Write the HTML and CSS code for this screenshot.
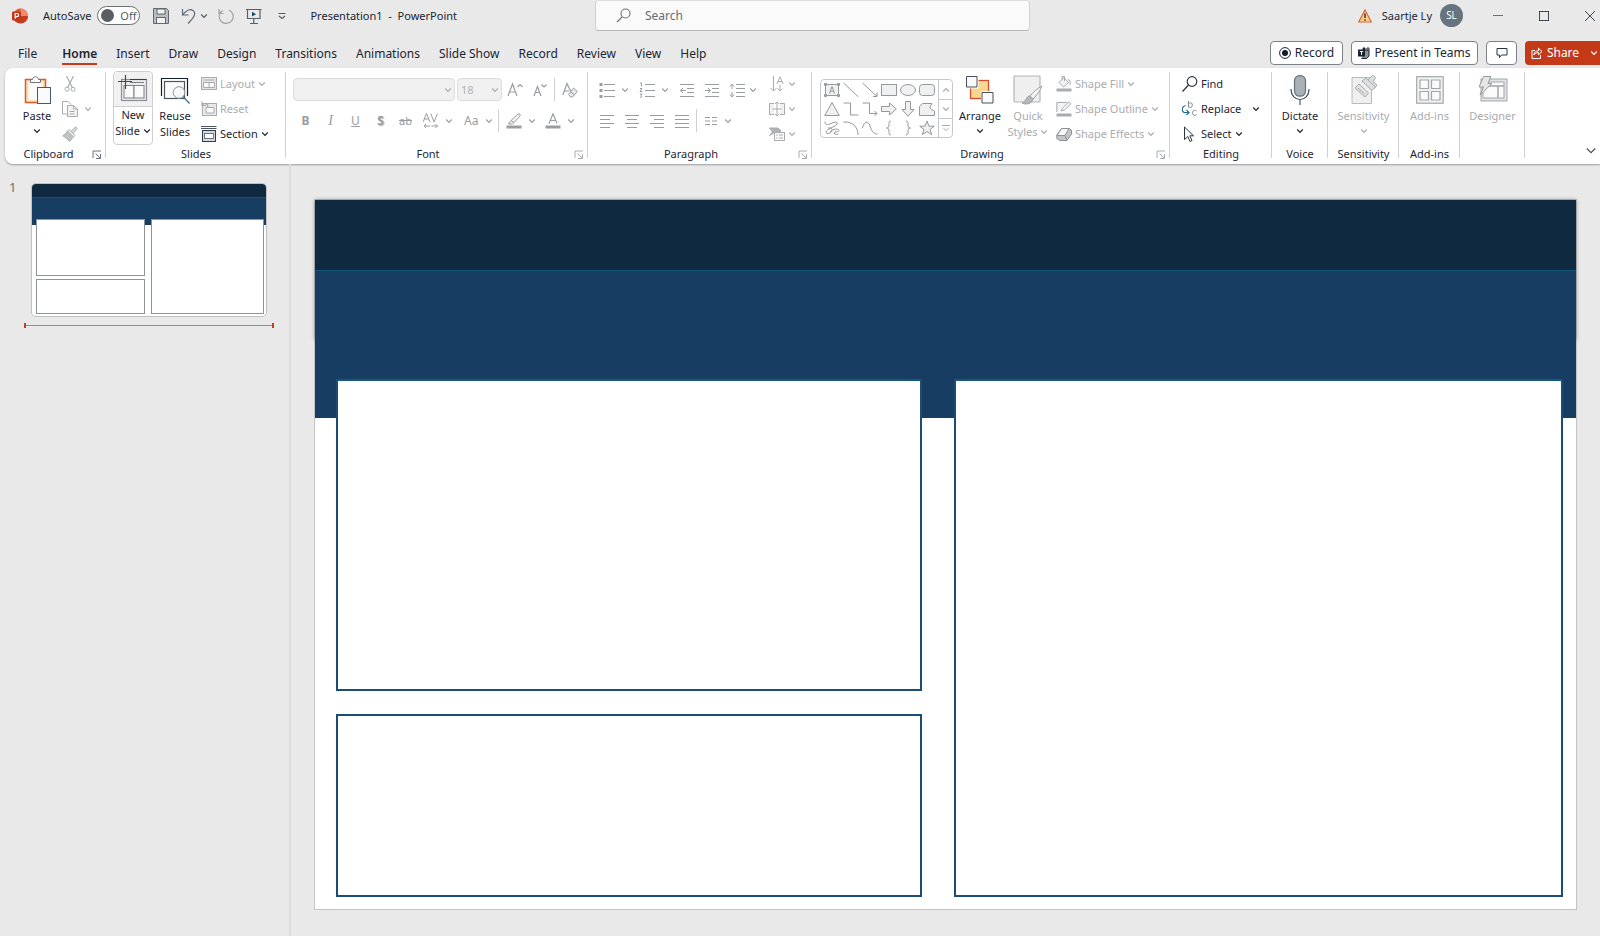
FILE: index.html
```html
<!DOCTYPE html>
<html lang="en">
<head>
<meta charset="utf-8">
<meta name="viewport" content="width=device-width, initial-scale=1">
<title>Presentation1 - PowerPoint</title>
<link rel="stylesheet" href="styles.css">
</head>
<body>
<svg class="defs" aria-hidden="true">
  <symbol id="chev" viewBox="0 0 8 6"><path d="M1.200 1.500 4 4.300 6.800 1.500" fill="none" stroke="currentColor" stroke-width="1.200"/></symbol>
  <symbol id="launch" viewBox="0 0 10 10"><path d="M1 8V1H9M3.500 3.500 8 8M8.500 4V8.500H4" fill="none" stroke="currentColor"/></symbol>
</svg>

<header class="titlebar">
  <div class="title-left">
    <svg class="logo" viewBox="0 0 16 16"><circle cx="8.500" cy="8" r="7.500" fill="#e0582f"/><path d="M8.500.5A7.500 7.500 0 0 1 16 8H8.500z" fill="#f08a68"/><path d="M1.500 10.500A7.500 7.500 0 0 0 16 8H8z" fill="#c43e1c"/><rect y="3.500" width="9" height="9" rx="1" fill="#c2371a"/><path d="M3.200 10.800V5.500H5a1.500 1.500 0 0 1 0 3.200H3.200" fill="none" stroke="#fff" stroke-width="1.200"/></svg>
    <label class="autosave" for="autosave">AutoSave</label>
    <span class="toggle"><input type="checkbox" id="autosave"><span class="knob"></span><span>Off</span></span>
    <button class="qa save" aria-label="Save"><svg width="16" height="16" viewBox="0 0 16 16"><path d="M.5.5H13.500L15.500 2.500V15.500H.5z" fill="#b9bdc1" stroke="#62686e"/><rect x="4" y="1" width="8" height="5" fill="#f1f1f1" stroke="#62686e"/><rect x="3.500" y="9.500" width="9" height="6" fill="#f1f1f1" stroke="#62686e"/></svg></button>
    <button class="qa undo" aria-label="Undo"><svg width="16" height="16" viewBox="0 0 16 16"><path d="M1.500 1V7H7.500M2 6.500C5 2.500 9 .5 12 2.500 15.500 5 13.500 9 7 15.500" fill="none" stroke="#5c6878" stroke-width="1.200"/></svg><svg class="chev"><use href="#chev"/></svg></button>
    <button class="qa redo" aria-label="Repeat"><svg width="16" height="16" viewBox="0 0 16 16"><path d="M1 1V5.500H5.500M11 2A7 7 0 1 1 4.500 2.500L1.500 5" fill="none" stroke="#a0a4a8" stroke-width="1.200"/></svg></button>
    <button class="qa present" aria-label="Start from beginning"><svg width="16" height="16" viewBox="0 0 16 16"><path d="M0 1.500H15.500M1.500 2V10.500H14V2M7.750 10.500V15M4 15.500H12" fill="none" stroke="#54616e" stroke-width="1.200"/><path d="M6 3.800 10 6.200 6 8.600z" fill="#174a6b"/></svg></button>
    <button class="qa more" aria-label="Customize toolbar"><svg width="8" height="8" viewBox="0 0 8 8"><path d="M.5 1.500H7.500M1 4 4 6.500 7 4" fill="none" stroke="#555c63" stroke-width="1.100"/></svg></button>
    <h1 class="doc">Presentation1&nbsp; -&nbsp; PowerPoint</h1>
  </div>
  <label class="search"><svg width="15" height="15" viewBox="0 0 15 15"><circle cx="9.500" cy="5.500" r="4.500" fill="none" stroke="#6b7076" stroke-width="1.100"/><path d="M6.200 8.800 1 14" stroke="#6b7076" stroke-width="1.200"/></svg><input type="text" placeholder="Search" aria-label="Search"></label>
  <div class="title-right">
    <svg class="warn" width="14" height="14" viewBox="0 0 14 14"><path d="M7 1 13.300 13H.7z" fill="#ffcf8a" stroke="#d9663c" stroke-width="1.200"/><path d="M7 4.500V9M7 10.300V11.800" stroke="#444" stroke-width="1.600"/></svg>
    <span class="user">Saartje Ly</span>
    <span class="avatar">SL</span>
    <button class="win" aria-label="Minimize"><svg width="10" height="10" viewBox="0 0 10 10"><path d="M0 4.500H10" stroke="#6a7178"/></svg></button>
    <button class="win" aria-label="Maximize"><svg width="10" height="10" viewBox="0 0 10 10"><rect x=".5" y=".5" width="9" height="9" fill="none" stroke="#3b4650"/></svg></button>
    <button class="win" aria-label="Close"><svg width="10" height="10" viewBox="0 0 10 10"><path d="M0 0 10 10M10 0 0 10" stroke="#3b4650"/></svg></button>
  </div>
</header>

<nav class="tabs" aria-label="Ribbon tabs">
  <a href="#file">File</a><a href="#home" class="active" aria-current="page">Home</a><a href="#insert">Insert</a><a href="#draw">Draw</a><a href="#design">Design</a><a href="#transitions">Transitions</a><a href="#animations">Animations</a><a href="#slideshow">Slide Show</a><a href="#record">Record</a><a href="#review">Review</a><a href="#view">View</a><a href="#help">Help</a>
  <div class="actions">
    <button class="pill rec"><svg width="12" height="12" viewBox="0 0 12 12"><circle cx="6" cy="6" r="5.400" fill="none" stroke="#1b2230"/><circle cx="6" cy="6" r="3" fill="#0f1a2c"/></svg>Record</button>
    <button class="pill teams"><svg width="12" height="12" viewBox="0 0 12 12"><path d="M5 3H11V9L8.500 11.500H3.500" fill="#8a929c" stroke="#1b2230"/><circle cx="6" cy="1.800" r="1.500" fill="#1b2230"/><circle cx="10" cy="2" r="1.200" fill="#fff" stroke="#1b2230"/><rect y="2.500" width="7" height="7" fill="#16202f"/><path d="M1.800 4.500H5.200M3.500 4.500V8" stroke="#fff"/></svg>Present in Teams</button>
    <button class="pill comment" aria-label="Comments"><svg width="12" height="12" viewBox="0 0 12 12"><path d="M1 1.500H11V8H5.500L3.500 10.500V8H1z" fill="none" stroke="#2a3340"/></svg></button>
    <button class="share"><svg width="12" height="12" viewBox="0 0 12 12"><path d="M4 3.500H1V11.500H9.500V8M2.800 8C3.200 5 5 3.800 7.500 3.800V1.200L11 4.600 7.500 7.800V5.600C5.500 5.600 4 6.200 2.800 8z" fill="none" stroke="#fff"/></svg>Share<svg class="chev"><use href="#chev"/></svg></button>
  </div>
</nav>

<section class="ribbon" aria-label="Home">
  <div class="group clipboard">
    <div class="body">
      <button class="big"><span class="ic"><svg width="32" height="30" viewBox="-3 0 32 30"><path d="M1.500 4.500H21.500V27.500H1.500z" fill="#fbe3bd" stroke="#e0592c" stroke-width="1.500"/><rect x="4.500" y="7" width="14" height="18" fill="#fafafa"/><path d="M6.500 7.500V4.500H8.500C9 .8 14 .8 14.500 4.500H16.500V7.500z" fill="#fff" stroke="#6d747b"/><rect x="13.500" y="12.500" width="13" height="16" fill="#f8fafc" stroke="#4c5866"/></svg></span><span>Paste</span><svg class="chev"><use href="#chev"/></svg></button>
      <div class="stack off">
        <button class="row" aria-label="Cut"><svg width="16" height="16" viewBox="0 0 16 16"><path d="M4.500 0 10.500 12M11.500 0 5.500 12" stroke="currentColor" stroke-width="1.200"/><circle cx="5" cy="13.200" r="2" fill="none" stroke="currentColor"/><circle cx="11" cy="13.200" r="2" fill="none" stroke="currentColor"/></svg></button>
        <button class="row" aria-label="Copy"><svg width="16" height="16" viewBox="0 0 16 16"><path d="M5 13H.5V.5H6L9 3.500" fill="none" stroke="currentColor"/><path d="M5.500 4.500H11.500L15.500 8V15.500H5.500z" fill="#f3f3f3" stroke="currentColor"/><path d="M11.500 4.500V8H15M7.500 10.500H12.500M7.500 13H12.500" fill="none" stroke="currentColor"/></svg><svg class="chev gap"><use href="#chev"/></svg></button>
        <button class="row" aria-label="Format painter"><svg width="16" height="16" viewBox="0 0 16 16"><path d="M8.500 6 13.500.8 15.200 2.400 10.500 8" fill="#ddd" stroke="currentColor"/><path d="M7 3.500 13 9.500 11.500 11 5.500 5z" fill="#f1f1f1" stroke="currentColor"/><path d="M5 5.500 11 11.500 7.500 15.500C6 13 3 11.500.8 9.800 2.500 9 4 7.500 5 5.500z" fill="#bfc3c6" stroke="currentColor"/></svg></button>
      </div>
    </div>
    <div class="caption"><span>Clipboard</span><button class="launch" aria-label="Clipboard options"><svg width="10" height="10"><use href="#launch"/></svg></button></div>
  </div>

  <div class="group slides">
    <div class="body">
      <button class="big framed"><span class="ic"><svg width="30" height="28" viewBox="0 0 30 28"><rect x="3.500" y="4.500" width="25" height="21" fill="#ececec" stroke="#8b9197" stroke-width="1.200"/><path d="M12 4.500H28.500" stroke="#33424f"/><rect x="6" y="10.500" width="10" height="12.500" fill="#fafafa" stroke="#7b8289"/><rect x="16" y="10.500" width="10" height="12.500" fill="#fafafa" stroke="#7b8289"/><path d="M12 7.500H26" stroke="#7b8289"/><path d="M7.500 0V14M0 6.500H14" stroke="#3d4b57" stroke-width="1.200"/></svg></span><span>New</span><span>Slide <svg class="chev"><use href="#chev"/></svg></span></button>
      <button class="big reuse"><span class="ic"><svg width="30" height="28" viewBox="0 0 30 28"><path d="M1.500 20V2.500H27.500V20" fill="none" stroke="#101e35" stroke-width="1.200"/><rect x="4.500" y="5.500" width="20" height="17" fill="#fafafa" stroke="#4b5662" stroke-width="1.200"/><circle cx="19" cy="16.500" r="5.800" fill="#f5f7f9" stroke="#8b9197"/><path d="M23.200 20.700 29.500 27.500" stroke="#2b6b92" stroke-width="1.200"/></svg></span><span>Reuse</span><span>Slides</span></button>
      <div class="stack">
        <button class="row off"><svg width="16" height="16" viewBox="0 0 16 16"><rect x=".5" y="1.500" width="15" height="12" fill="#e6e6e6" stroke="currentColor"/><path d="M2.500 4H13.500M2.500 6.500H13.500V11.500H2.500zM8 6.500V11.500" fill="#fafafa" stroke="currentColor"/></svg><span>Layout</span><svg class="chev"><use href="#chev"/></svg></button>
        <button class="row off"><svg width="16" height="16" viewBox="0 0 16 16"><rect x="1.500" y="2.500" width="14" height="12" fill="#e9e9e9" stroke="currentColor"/><path d="M5 6.500H13V12H5z" fill="#fafafa" stroke="currentColor"/><path d="M1 .5V4.500H5M1.500 4C4 1 8 3 6.500 7" fill="none" stroke="currentColor" stroke-width="1.200"/></svg><span>Reset</span></button>
        <button class="row"><svg width="16" height="16" viewBox="0 0 16 16"><path d="M0 .5H15.500M0 2.500H15.500" stroke="#4a5561"/><rect x="1.500" y="4.500" width="13" height="11" fill="#d5d8da" stroke="#303c4a"/><rect x="3.500" y="7.500" width="9" height="5" fill="#fff" stroke="#6b747d"/></svg><span>Section</span><svg class="chev"><use href="#chev"/></svg></button>
      </div>
    </div>
    <div class="caption"><span>Slides</span></div>
  </div>

  <div class="group font off">
    <div class="body rows">
      <div class="line">
        <span class="combo wide"><select aria-label="Font" disabled><option></option></select><svg class="chev"><use href="#chev"/></svg></span>
        <span class="combo size"><select aria-label="Font size" disabled><option>18</option></select><svg class="chev"><use href="#chev"/></svg></span>
        <button class="tb" aria-label="Increase font size"><svg width="16" height="16" viewBox="0 0 16 16"><path d="M1 14 5.500 2 10 14M2.500 10H8.500M10.500 5 13 2.500 15.500 5" fill="none" stroke="currentColor" stroke-width="1.200"/></svg></button>
        <button class="tb" aria-label="Decrease font size"><svg width="16" height="16" viewBox="0 0 16 16"><path d="M2 14 5.500 4.500 9 14M3 10.500H8M9.500 2.500 12 5 14.500 2.500" fill="none" stroke="currentColor" stroke-width="1.200"/></svg></button>
        <i class="bar"></i>
        <button class="tb" aria-label="Clear formatting"><svg width="16" height="16" viewBox="0 0 16 16"><path d="M.8 13 5 1.500 9 10M2.500 9H7" fill="none" stroke="currentColor" stroke-width="1.200"/><path d="M11.500 6 15.300 9.500 10.500 15H8.500L6.500 12.500zM8.500 9.500 12.500 13" fill="#e9e9e9" stroke="currentColor"/></svg></button>
      </div>
      <div class="line">
        <button class="tb"><b>B</b></button><button class="tb"><i class="ital">I</i></button><button class="tb"><u>U</u></button><button class="tb"><b class="shadow">S</b></button><button class="tb"><s>ab</s></button>
        <button class="split" aria-label="Character spacing"><svg width="16" height="16" viewBox="0 0 16 16"><path d="M0 9 3.500.5 7 9M1.200 6H5.800M7.800.5 11 9 14.500.5M1 13H7M8.500 13H14.500M3 11 1 13 3 15M12.500 11 14.500 13 12.500 15" fill="none" stroke="currentColor"/></svg><svg class="chev"><use href="#chev"/></svg></button>
        <button class="split case">Aa<svg class="chev"><use href="#chev"/></svg></button>
        <i class="bar"></i>
        <button class="split" aria-label="Highlight"><svg width="16" height="16" viewBox="0 0 16 16"><path d="M5 7.500 12 1C14 .5 14.500 1.500 14 3L8 9.500zM5 7.500 2.500 11H6.500L8 9.500" fill="#f3f3f3" stroke="currentColor"/><rect x=".5" y="12.500" width="15" height="3" fill="currentColor"/></svg><svg class="chev"><use href="#chev"/></svg></button>
        <button class="split" aria-label="Font color"><svg width="16" height="16" viewBox="0 0 16 16"><path d="M4 10.500 8 .8 12 10.500M5.200 7.500H10.800" fill="none" stroke="currentColor" stroke-width="1.200"/><rect x=".5" y="12.500" width="15" height="3" fill="currentColor"/></svg><svg class="chev"><use href="#chev"/></svg></button>
      </div>
    </div>
    <div class="caption"><span>Font</span><button class="launch" aria-label="Font options"><svg width="10" height="10"><use href="#launch"/></svg></button></div>
  </div>

  <div class="group para off">
    <div class="body">
      <div class="rows">
        <div class="line">
          <button class="split" aria-label="Bullets"><svg width="16" height="16" viewBox="0 0 16 16"><path d="M5 2.500H16M5 8.500H16M5 14.500H16" stroke="currentColor"/><path d="M.5 1H3.500V4H.5zM.5 7H3.500V10H.5zM.5 13H3.500V16H.5z" fill="currentColor"/></svg><svg class="chev"><use href="#chev"/></svg></button>
          <button class="split" aria-label="Numbering"><svg width="16" height="16" viewBox="0 0 16 16"><path d="M6 2.500H16M6 8.500H16M6 14.500H16M1 1H2.500V4.500M1 6.500H3L1 9.500H3.500M1 12H3L2 13.500 3 14.500 1 15.500" fill="none" stroke="currentColor"/></svg><svg class="chev"><use href="#chev"/></svg></button>
          <button class="tb" aria-label="Decrease indent"><svg width="16" height="16" viewBox="0 0 16 16"><path d="M1 2.500H15M8 6.500H15M8 10.500H15M1 14.500H15M7 8.500H1.500M4 6 1.500 8.500 4 11" fill="none" stroke="currentColor"/></svg></button>
          <button class="tb" aria-label="Increase indent"><svg width="16" height="16" viewBox="0 0 16 16"><path d="M1 2.500H15M8 6.500H15M8 10.500H15M1 14.500H15M1 8.500H6.500M4 6 6.500 8.500 4 11" fill="none" stroke="currentColor"/></svg></button>
          <button class="split spacing" aria-label="Line spacing"><svg width="16" height="16" viewBox="0 0 16 16"><path d="M7 2.500H16M7 6.500H16M7 10.500H16M7 14.500H16M3 2V7M3 10V15M.8 4.500 3 2.200 5.200 4.500M.8 12.500 3 14.800 5.200 12.500" fill="none" stroke="currentColor"/></svg><svg class="chev"><use href="#chev"/></svg></button>
        </div>
        <div class="line">
          <button class="tb" aria-label="Align left"><svg width="16" height="16" viewBox="0 0 16 16"><path d="M1 2.500H15M1 6.500H11M1 10.500H15M1 14.500H11" stroke="currentColor"/></svg></button>
          <button class="tb" aria-label="Center"><svg width="16" height="16" viewBox="0 0 16 16"><path d="M1 2.500H15M3 6.500H13M1 10.500H15M3 14.500H13" stroke="currentColor"/></svg></button>
          <button class="tb" aria-label="Align right"><svg width="16" height="16" viewBox="0 0 16 16"><path d="M1 2.500H15M5 6.500H15M1 10.500H15M5 14.500H15" stroke="currentColor"/></svg></button>
          <button class="tb" aria-label="Justify"><svg width="16" height="16" viewBox="0 0 16 16"><path d="M1 2.500H15M1 6.500H15M1 10.500H15M1 14.500H15" stroke="currentColor"/></svg></button>
          <i class="bar"></i>
          <button class="split spacing" aria-label="Columns"><svg width="16" height="16" viewBox="0 0 16 16"><path d="M1 4.500H6M8 4.500H13M1 8H6M8 8H13M1 11.500H6M8 11.500H13" stroke="currentColor"/></svg><svg class="chev"><use href="#chev"/></svg></button>
        </div>
      </div>
      <div class="stack">
        <button class="row" aria-label="Text direction"><svg width="16" height="16" viewBox="0 0 16 16"><path d="M4.500 0V15M1.500 12 4.500 15 7.500 12M8 8 11 .8 14 8M9 5.500H13M11 9V15M8.500 12.500 11 15 13.500 12.500" fill="none" stroke="currentColor"/></svg><svg class="chev"><use href="#chev"/></svg></button>
        <button class="row" aria-label="Align text"><svg width="16" height="16" viewBox="0 0 16 16"><path d="M5 2.500H.5V13.500H5M11 2.500H15.500V13.500H11" fill="#f1f1f1" stroke="currentColor"/><path d="M3.500 8H12.500M8 1V15M6 3 8 1 10 3M6 13 8 15 10 13" fill="none" stroke="currentColor"/></svg><svg class="chev"><use href="#chev"/></svg></button>
        <button class="row" aria-label="Convert to SmartArt"><svg width="16" height="16" viewBox="0 0 16 16"><path d="M.5 2H9L12 5 9.500 7H5L.5 9.500 3.500 6z" fill="#b0b4b7" stroke="currentColor"/><rect x="5.500" y="6.500" width="10" height="8" fill="#fafafa" stroke="currentColor"/><path d="M7 9H8.500M10 9H14M7 12H8.500M10 12H14" stroke="currentColor"/></svg><svg class="chev"><use href="#chev"/></svg></button>
      </div>
    </div>
    <div class="caption"><span>Paragraph</span><button class="launch" aria-label="Paragraph options"><svg width="10" height="10"><use href="#launch"/></svg></button></div>
  </div>

  <div class="group drawing">
    <div class="body">
      <div class="gallery off">
        <div class="shapes">
          <button aria-label="Text box"><svg viewBox="0 0 16 16"><rect x="1.500" y="2.500" width="13" height="11"/><path d="M5.500 11.500 8 4.500 10.500 11.500M6.500 9.300H9.500"/><path d="M.5 1.500h2v2h-2zM13.500 1.500h2v2h-2zM.5 12.500h2v2h-2zM13.500 12.500h2v2h-2z" fill="#aaa"/></svg></button>
          <button aria-label="Line"><svg viewBox="0 0 16 16"><path d="M.5 1 15.500 15"/></svg></button>
          <button aria-label="Arrow line"><svg viewBox="0 0 16 16"><path d="M.5 1 15 14.500M15 10.500V14.500H11"/></svg></button>
          <button aria-label="Rectangle"><svg viewBox="0 0 16 16"><rect x=".5" y="2.500" width="15" height="11"/></svg></button>
          <button aria-label="Oval"><svg viewBox="0 0 16 16"><ellipse cx="8" cy="8" rx="7.500" ry="5.500"/></svg></button>
          <button aria-label="Rounded rectangle"><svg viewBox="0 0 16 16"><rect x=".5" y="2.500" width="15" height="11" rx="3"/></svg></button>
          <button aria-label="Triangle"><svg viewBox="0 0 16 16"><path d="M8 1.500 15.300 14.500H.7z"/></svg></button>
          <button aria-label="Elbow connector"><svg viewBox="0 0 16 16"><path d="M.5 2H7.500V14H15.500" fill="none"/></svg></button>
          <button aria-label="Elbow arrow"><svg viewBox="0 0 16 16"><path d="M.5 2H7.500V12.500H15M12.500 10 15 12.500 12.500 15" fill="none"/></svg></button>
          <button aria-label="Right arrow"><svg viewBox="0 0 16 16"><path d="M.5 5.500H8.500V2L15.300 8 8.500 14V10.500H.5z"/></svg></button>
          <button aria-label="Down arrow"><svg viewBox="0 0 16 16"><path d="M5.500.5V8.500H2L8 15.300 14 8.500H10.500V.5z"/></svg></button>
          <button aria-label="Freeform"><svg viewBox="0 0 16 16"><path d="M3.500 2.500H13L11 6C11 9 14 9 15.500 10V14.500H.5V5.500z"/></svg></button>
          <button aria-label="Scribble"><svg viewBox="0 0 16 16"><path d="M1 1.500C1 5 3 5.500 7 3.500 11 1.500 14 1.500 13 4 12 6.500 5 8 2.500 11 1 13.500 4 15 7 12 9.500 9 7 7.500 4 8M6 12.500C9 8 15 8.500 15 10.500 15 12.500 10 11 10 13 10.500 15 13 14 14.500 14" fill="none"/></svg></button>
          <button aria-label="Arc"><svg viewBox="0 0 16 16"><path d="M.5 2C9 1.500 15 6 15 15" fill="none"/></svg></button>
          <button aria-label="Curve"><svg viewBox="0 0 16 16"><path d="M.5 8C2 1 6 0 8 6S12 14 15.500 14" fill="none"/></svg></button>
          <button aria-label="Left brace"><svg viewBox="0 0 16 16"><path d="M10 1C7.500 1 8 3 8 5S7.500 8 5.500 8C7.500 8 8 9 8 11S7.500 15 10 15" fill="none"/></svg></button>
          <button aria-label="Right brace"><svg viewBox="0 0 16 16"><path d="M6 1C8.500 1 8 3 8 5S8.500 8 10.500 8C8.500 8 8 9 8 11S8.500 15 6 15" fill="none"/></svg></button>
          <button aria-label="Star"><svg viewBox="0 0 16 16"><path d="M8 1 10 6.200H15.300L11 9.500 12.700 14.700 8 11.500 3.300 14.700 5 9.500.7 6.200H6z"/></svg></button>
        </div>
        <div class="scroll">
          <button aria-label="Scroll up"><svg class="chev up"><use href="#chev"/></svg></button>
          <button aria-label="Scroll down"><svg class="chev"><use href="#chev"/></svg></button>
          <button aria-label="More shapes"><svg width="8" height="8" viewBox="0 0 8 8"><path d="M0 1.500H8M1.200 4 4 6.500 6.800 4" fill="none" stroke="currentColor"/></svg></button>
        </div>
      </div>
      <button class="big arrange"><span class="ic"><svg width="28" height="28" viewBox="0 0 28 28"><rect x="4.500" y="4.500" width="18" height="18" fill="#f9d694" stroke="#d4502b" stroke-width="1.300"/><path d="M0 0H12.500V12.500H0zM15 15H28V28H15z" fill="#fff"/><path d="M.5.500H11V11H.5zM16 16.500H27V27H16z" fill="#fafafa" stroke="#46515c"/></svg></span><span>Arrange</span><svg class="chev"><use href="#chev"/></svg></button>
      <button class="big quick off"><span class="ic"><svg width="30" height="30" viewBox="0 0 30 30"><rect x="1" y="1" width="26" height="26" rx="1" fill="#efefef" stroke="#b3b6b9" stroke-width="1.200"/><path d="M29 11C25 13 20 17 17 21L20 24C24 20 27 16 29 11z" fill="#f5f5f5" stroke="#9a9ea2"/><path d="M17 21C13 21 14 26 9 28 13 30 19 29 20 24z" fill="#b6b9bc" stroke="#9a9ea2"/></svg></span><span>Quick</span><span>Styles <svg class="chev"><use href="#chev"/></svg></span></button>
      <div class="stack off">
        <button class="row"><svg width="16" height="16" viewBox="0 0 16 16"><path d="M3 6.500 8 1.500 12.500 6.500 7.500 11zM6 3.500V.5H8.500V5M12 3.500C14 4 14.500 6 14 9" fill="#f3f3f3" stroke="currentColor"/><rect x=".5" y="12.500" width="15" height="3" fill="currentColor"/></svg><span>Shape Fill</span><svg class="chev"><use href="#chev"/></svg></button>
        <button class="row"><svg width="16" height="16" viewBox="0 0 16 16"><path d="M11 1.500H.8V11M5 10 6.500 7 13 .8 15 2.800 8.500 9z" fill="#f3f3f3" stroke="currentColor"/><rect x=".5" y="12.500" width="15" height="3" fill="currentColor"/></svg><span>Shape Outline</span><svg class="chev"><use href="#chev"/></svg></button>
        <button class="row"><svg width="16" height="16" viewBox="0 0 16 16"><path d="M5.500 2.500H13L15.500 4V8L11 14.500H3.500L.8 12.500V9z" fill="#c3c6c9" stroke="#8d9297"/><path d="M5.500 2.500H13L9 9.500H1z" fill="#f7f7f7" stroke="#8d9297"/><path d="M9 9.500 11 14" stroke="#8d9297"/></svg><span>Shape Effects</span><svg class="chev"><use href="#chev"/></svg></button>
      </div>
    </div>
    <div class="caption"><span>Drawing</span><button class="launch off" aria-label="Drawing options"><svg width="10" height="10"><use href="#launch"/></svg></button></div>
  </div>

  <div class="group editing">
    <div class="body">
      <div class="stack">
        <button class="row"><svg width="16" height="16" viewBox="0 0 16 16"><circle cx="10" cy="5.500" r="4.800" fill="none" stroke="#2f3a47" stroke-width="1.200"/><path d="M6.500 9 .5 15.500" stroke="#2f3a47" stroke-width="1.300"/></svg><span>Find</span></button>
        <button class="row replace"><svg width="16" height="16" viewBox="0 0 16 16"><path d="M6.500 0V6.500M6.500 3.500C8-.2 11.500 2.500 10 5.500 9 7 7.500 6.500 6.500 5.500M14.500 10C12 8 10 10.500 10.500 12.500S13 15 14.500 13.500" fill="none" stroke="#7b8791"/><path d="M3.500 4.500C-.5 5.500-.5 10 2 11.500H7M4.500 9 7 11.500 4.500 14" fill="none" stroke="#1f7196" stroke-width="1.200"/></svg><span>Replace</span><svg class="chev"><use href="#chev"/></svg></button>
        <button class="row"><svg width="16" height="16" viewBox="0 0 16 16"><path d="M2.500 1V13.500L5.800 10.500 8 15.500 10 14.500 7.800 9.800H11.500z" fill="#fff" stroke="#2a3340"/></svg><span>Select</span><svg class="chev"><use href="#chev"/></svg></button>
      </div>
    </div>
    <div class="caption"><span>Editing</span></div>
  </div>

  <div class="group voice">
    <div class="body"><button class="big"><span class="ic"><svg width="20" height="30" viewBox="0 0 20 30"><rect x="4.500" y=".7" width="11" height="20.500" rx="5" fill="#a9b0b6" stroke="#66717b" stroke-width="1.200"/><path d="M1 14C1 28 19 28 19 14M10 24.500V30" fill="none" stroke="#4a5560" stroke-width="1.200"/></svg></span><span>Dictate</span><svg class="chev"><use href="#chev"/></svg></button></div>
    <div class="caption"><span>Voice</span></div>
  </div>
  <div class="group sens">
    <div class="body"><button class="big off"><span class="ic"><svg width="28" height="30" viewBox="0 0 28 30"><path d="M2 2.500H21.500V28.500H2z" fill="#efefef" stroke="#b9bcbf"/><path d="M5 13 9 9 18.500 18 15 22z" fill="#e2e2e2" stroke="#aaa"/><path d="M8 13 14.500 19" stroke="#aaa"/><path d="M12 6 16 3 25.500 12 22 15.500zM18 5 22 .8C24 0 26 2 25 4L23 6.500 27 10 25.500 12" fill="#dcdee0" stroke="#a3a7ab"/></svg></span><span>Sensitivity</span><svg class="chev"><use href="#chev"/></svg></button></div>
    <div class="caption"><span>Sensitivity</span></div>
  </div>
  <div class="group addins">
    <div class="body"><button class="big off"><span class="ic"><svg width="28" height="28" viewBox="0 0 28 28"><rect x=".7" y=".7" width="26.500" height="26.500" fill="#f1f1f1" stroke="#a3a7ab" stroke-width="1.200"/><path d="M4 4H12.500V12.500H4zM15.500 4H24V12.500H15.500zM4 15.500H12.500V24H4zM15.500 15.500H24V24H15.500z" fill="#fafafa" stroke="#a3a7ab" stroke-width="1.200"/></svg></span><span>Add-ins</span></button></div>
    <div class="caption"><span>Add-ins</span></div>
  </div>
  <div class="group designer">
    <div class="body"><button class="big off"><span class="ic"><svg width="30" height="28" viewBox="0 0 30 28"><rect x="3" y="3" width="26" height="22" fill="#e2e3e4" stroke="#a3a7ab"/><path d="M5 6H26V10H5zM5 10H20V22H5zM20 10H26V22H20z" fill="#fafafa" stroke="#a3a7ab"/><path d="M5.500.5H13L10 7.500H14L2 19 5.500 11H1z" fill="#e4e5e6" stroke="#979ba0"/></svg></span><span>Designer</span></button></div>
    <div class="caption"></div>
  </div>
  <button class="collapse" aria-label="Collapse ribbon"><svg width="10" height="8" viewBox="0 0 10 8"><path d="M.8 1.500 5 5.700 9.200 1.500" fill="none" stroke="currentColor" stroke-width="1.200"/></svg></button>
</section>

<main class="work">
  <aside class="panel" aria-label="Slides">
    <div class="thumb-row">
      <span class="num">1</span>
      <a class="slide thumb" href="#slide1" aria-label="Slide 1"><i class="dark"></i><i class="blue"></i><i class="box a"></i><i class="box b"></i><i class="box c"></i></a>
    </div>
    <div class="drop"></div>
  </aside>
  <section class="stage">
    <div class="slide canvas" id="slide1"><i class="glow"></i><i class="dark"></i><i class="blue"></i><i class="box a"></i><i class="box b"></i><i class="box c"></i></div>
  </section>
</main>
</body>
</html>
```

FILE: styles.css
```css
* { box-sizing: border-box; }
body {
  margin: 0;
  min-height: 100vh;
  display: flex;
  flex-direction: column;
  background: #e9e9e9;
  color: #1c2533;
  font: 12px/16px "Noto Sans", "Open Sans", sans-serif;
  overflow-x: hidden;
}
button {
  border: 0;
  padding: 0;
  background: none;
  color: inherit;
  font: inherit;
  white-space: nowrap;
}
svg { display: block; flex: none; }
a { color: inherit; text-decoration: none; }
.defs { position: absolute; width: 0; height: 0; }
.chev { width: 8px; height: 6px; }
.chev.up { transform: rotate(180deg); }
.off { color: #a9acaf; }

/* Title bar */
.titlebar { display: flex; height: 32px; align-items: flex-start; }
.title-left, .title-right { display: flex; flex: 1 1 0; height: 31px; align-items: center; }
.title-left { flex-grow: 583; padding-left: 12px; }
.title-right { flex-grow: 570; justify-content: flex-end; }
.logo { width: 16px; height: 16px; }
.autosave { margin: 0 6px 0 15px; font-size: 11px; }
.toggle {
  position: relative;
  display: flex;
  align-items: center;
  gap: 6px;
  width: 43px;
  height: 19px;
  padding: 0 3px;
  border: 1px solid #6a6f74;
  border-radius: 10px;
  background: #fff;
  color: #555b61;
  font-size: 11px;
}
.toggle input { position: absolute; inset: 0; width: 100%; height: 100%; margin: 0; opacity: 0; }
.knob { width: 13px; height: 13px; border-radius: 50%; background: #5a5d61; }
.qa { display: flex; align-items: center; gap: 3px; color: #555c63; }
.save { margin-left: 13px; }
.undo { margin-left: 12px; }
.redo { margin-left: 10px; }
.present { margin-left: 12px; }
.more { margin-left: 16px; }
.doc { margin: 0 0 0 24px; font-size: 11px; font-weight: 400; white-space: nowrap; }
.search {
  display: flex;
  align-items: center;
  gap: 12px;
  flex: 0 1 435px;
  height: 31px;
  padding-left: 20px;
  background: #fafafa;
  border: 1px solid #d0d0d0;
  border-top-color: #dedede;
  border-bottom-color: #b8b8b8;
  border-radius: 4px;
}
.search input { flex: 1; min-width: 0; border: 0; outline: 0; background: none; font: inherit; color: #4c535a; }
.search input::placeholder { color: #666c72; opacity: 1; }
.user { margin: 0 8px 0 10px; font-size: 11px; }
.avatar {
  width: 23px;
  height: 23px;
  margin-right: 12px;
  border-radius: 50%;
  background: #66747f;
  color: #fff;
  font-size: 10px;
  line-height: 23px;
  text-align: center;
}
.win { width: 46px; height: 31px; display: grid; place-items: center; }
.win:last-child { width: 33px; padding-left: 12px; }

/* Tabs */
.tabs { display: flex; height: 36px; padding-left: 9px; align-items: flex-start; }
.tabs > a { margin: 14px 10px 0 9px; height: 19px; white-space: nowrap; }
.tabs > a:first-child { margin-right: 16px; }
.tabs > .active { font-weight: 600; border-bottom: 2px solid #c43e1c; }
.actions { display: flex; gap: 8px; margin-left: auto; padding-top: 9px; }
.pill, .share { display: flex; align-items: center; justify-content: center; gap: 4px; height: 24px; }
.pill { border: 1px solid #7c8288; border-radius: 4px; background: #fff; }
.rec { width: 73px; }
.teams { width: 127px; }
.comment { width: 31px; }
.share { width: 75px; padding-left: 4px; background: #c43a18; color: #fff; border-radius: 4px 0 0 4px; }
.share .chev { margin-left: 7px; }

/* Ribbon */
.ribbon {
  display: flex;
  height: 96px;
  margin-left: 5px;
  background: #fff;
  border-radius: 8px 0 0 8px;
  box-shadow: 0 1px 2px #00000055;
}
.group { position: relative; display: flex; flex-direction: column; flex: none; padding-top: 3px; }
.group::after { content: ""; position: absolute; right: 0; top: 4px; bottom: 6px; width: 1px; background: #d0d0d0; }
.body { display: flex; height: 75px; }
.caption { position: relative; height: 17px; text-align: center; font-size: 11px; color: #1c2533; }
.group.clipboard .caption { padding-right: 14px; }
.group.font .caption, .group.para .caption, .group.drawing .caption { padding-right: 18px; }
.launch { position: absolute; right: 4px; top: 4px; color: #6b7177; }
.off .launch, .launch.off { color: #a9acaf; }
.clipboard { width: 101px; }
.slides { width: 180px; }
.font { width: 302px; }
.para { width: 224px; }
.drawing { width: 358px; }
.editing { width: 102px; }
.voice { width: 56px; }
.sens { width: 71px; }
.addins { width: 61px; }
.designer { width: 65px; }
.clipboard .body { padding-left: 10px; gap: 3px; }
.slides .body { padding-left: 7px; }
.font .body { padding-left: 7px; }
.para .body { padding-left: 6px; }
.drawing .body { padding-left: 8px; }
.editing .body { padding-left: 12px; }

.big { display: flex; flex-direction: column; align-items: center; width: 44px; height: 74px; font-size: 11px; }
.big > .ic { display: grid; place-items: center; width: 100%; height: 37px; flex: none; }
.big > span:not(.ic) { display: flex; align-items: center; gap: 3px; height: 16px; }
.big > .chev { margin-top: 4px; }
.framed { width: 40px; border: 1px solid #cfcfcf; border-radius: 4px; }
.framed > .ic { height: 35px; border-bottom: 1px solid #cfcfcf; background: #f1f1f1; border-radius: 4px 4px 0 0; }
.reuse { margin-right: 4px; }
.arrange { width: 54px; }
.quick { width: 42px; margin-right: 7px; }
.voice .big, .sens .big, .addins .big, .designer .big { width: 100%; }

.stack { display: flex; flex-direction: column; }
.row { display: flex; align-items: center; gap: 3px; height: 25px; font-size: 11px; text-align: left; }
.row .gap { margin-left: 3px; }
.replace .chev { margin-left: 8px; }

.rows { display: flex; flex-direction: column; gap: 8px; padding-top: 7px; }
.group .rows { height: 75px; }
.para .rows { width: 175px; padding-left: 0; }
.line { display: flex; align-items: center; height: 23px; }
.tb { display: grid; place-items: center; width: 25px; height: 22px; color: #999da1; }
.split { display: flex; align-items: center; gap: 6px; width: 39px; height: 22px; padding-left: 5px; color: #999da1; }
.para .split { width: 40px; }
.para .spacing { gap: 4px; }
.case { gap: 7px; padding-left: 7px; }
.ital { font-family: "Liberation Serif", serif; font-size: 14px; }
.shadow { text-shadow: 1px 1px 1px #bbb; }
.tb s { font-size: 11px; }
.bar { width: 1px; height: 23px; margin: 0 2px; background: #d0d0d0; }
.combo { position: relative; width: 45px; height: 23px; }
.combo.wide { width: 162px; margin-right: 2px; }
.combo select {
  appearance: none;
  width: 100%;
  height: 100%;
  padding: 0 3px;
  border: 1px solid #dcdcdc;
  border-radius: 4px;
  background: #f0f0f0;
  color: #b0b3b6;
  font: inherit;
  font-size: 11px;
  opacity: 1;
}
.combo .chev { position: absolute; right: 3px; top: 9px; }

.gallery { display: flex; width: 133px; height: 59px; margin-top: 8px; border: 1px solid #c6c8ca; border-radius: 4px; }
.shapes { display: grid; grid-template-columns: repeat(6, 19px); grid-auto-rows: 19px; width: 117px; padding: 0 1px; }
.shapes button { display: grid; place-items: center; }
.shapes svg { width: 16px; height: 16px; fill: #f0f0f0; stroke: #94999d; stroke-width: 1px; }
.scroll { display: grid; grid-template-rows: repeat(3, 1fr); flex: 1; border-left: 1px solid #c6c8ca; }
.scroll button { display: grid; place-items: center; }
.scroll button + button { border-top: 1px solid #c6c8ca; }
.collapse { margin: 0 4px 9px auto; align-self: flex-end; color: #4a525a; }

/* Workspace */
.work { display: flex; flex: 1; }
.panel { width: 291px; flex: none; padding: 20px 15px 0 0; border-right: 2px solid #dcdcdc; }
.thumb-row { display: flex; align-items: flex-start; }
.num { width: 32px; padding-left: 9px; margin-top: -5px; font-size: 13px; color: #6a6f74; }
.drop {
  height: 5px;
  margin: 7px 0 0 24px;
  border: solid #c43e1c;
  border-width: 0 2px;
  background: linear-gradient(#d9755a, #d9755a) center / 100% 1px no-repeat;
}
.stage { flex: 1; padding: 36px 24px 0 24px; }
.slide {
  display: grid;
  aspect-ratio: 16 / 9;
  background: #fff;
  grid-template-columns: 21fr 586fr 32fr 609fr 13fr;
  grid-template-rows: 70fr 109fr 39fr 273fr 23fr 183fr 12fr;
}
.canvas { box-shadow: 0 0 0 1px #c4c4c4; }
.glow { grid-area: 1 / 1 / 3 / -1; margin-bottom: 39px; box-shadow: 0 0 4px #00000066; }
.dark { grid-area: 1 / 1 / 2 / -1; background: #0f2940; z-index: 1; }
.blue { grid-area: 2 / 1 / 4 / -1; background: #173d63; border-top: 1px solid #125377; z-index: 1; }
.box { background: #fff; border: 2px solid #1a4d78; z-index: 2; }
.a { grid-area: 3 / 2 / 5 / 3; }
.b { grid-area: 6 / 2 / 7 / 3; }
.c { grid-area: 3 / 4 / 7 / 5; }
.a, .c { border-top-color: #145a7f; }
.thumb { width: 234px; border-radius: 4px; overflow: hidden; box-shadow: 0 0 0 1px #c0c0c0; grid-template-rows: 13fr 22fr 6fr 52fr 3fr 35fr 2fr; }
.thumb .box { border-width: 1px; border-color: #8c939b; }
```
